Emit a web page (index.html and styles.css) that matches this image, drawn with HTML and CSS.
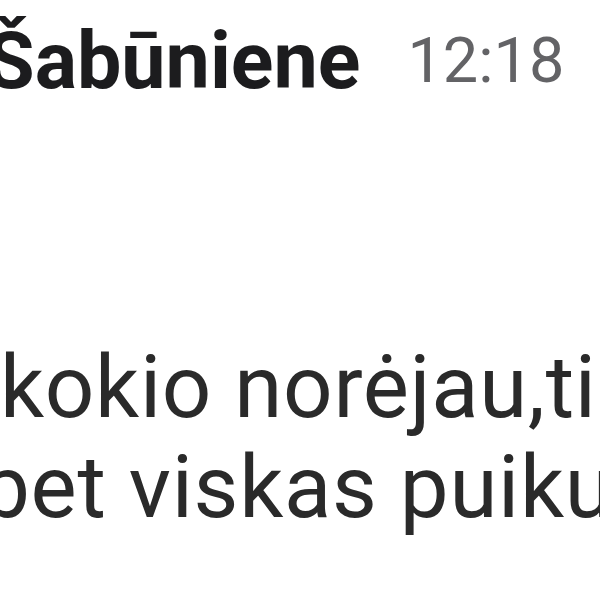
FILE: index.html
```html
<!DOCTYPE html>
<html lang="lt">
<head>
<meta charset="utf-8">
<link rel="stylesheet" href="styles.css">
</head>
<body>
<div class="review">
  <div class="head">
    <span class="name">Šabūniene</span>
    <span class="time">12:18</span>
  </div>
  <div class="text">
    <div class="line l1">kokio norėjau,tik</div>
    <div class="line l2">bet viskas puikus</div>
  </div>
</div>
</body>
</html>
```
FILE: styles.css
```css
html, body {
  margin: 0;
  padding: 0;
  background: #ffffff;
}
.review {
  width: 600px;
  height: 600px;
  overflow: hidden;
  font-family: Roboto, "Noto Sans", sans-serif;
}
.head {
  display: flex;
  align-items: center;
  white-space: nowrap;
  margin-left: -14px;
  padding-top: 11px;
  gap: 47px;
}
.name {
  font-size: 79px;
  font-weight: 700;
  color: #1c1c1e;
  line-height: 100px;
}
.time {
  font-size: 63px;
  font-weight: 400;
  color: #636366;
  line-height: 100px;
}
.text {
  margin-top: 226px;
  font-size: 87px;
  line-height: 100px;
  letter-spacing: 0.7px;
  color: #2a2a2a;
  white-space: nowrap;
}
.l1 {
  margin-left: 0;
}
.l2 {
  margin-left: -19px;
}
```
